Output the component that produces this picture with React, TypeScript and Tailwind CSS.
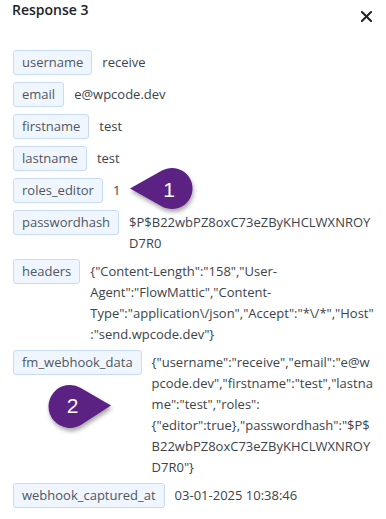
import React from "react";

const rows: [string, string][] = [
  ["username", "receive"],
  ["email", "e@wpcode.dev"],
  ["firstname", "test"],
  ["lastname", "test"],
  ["roles_editor", "1"],
  ["passwordhash", "$P$B22wbPZ8oxC73eZByKHCLWXNROYD7R0"],
  [
    "headers",
    '{"Content-Length":"158","User-Agent":"FlowMattic","Content-Type":"application\\/json","Accept":"*\\/*","Host":"send.wpcode.dev"}',
  ],
  [
    "fm_webhook_data",
    '{"username":"receive","email":"e@wpcode.dev","firstname":"test","lastname":"test","roles":{"editor":true},"passwordhash":"$P$B22wbPZ8oxC73eZByKHCLWXNROYD7R0"}',
  ],
  ["webhook_captured_at", "03-01-2025 10:38:46"],
];

function dropPath(px: number, py: number, cx: number, cy: number, r: number) {
  const d = Math.hypot(px - cx, py - cy);
  const a = Math.atan2(py - cy, px - cx);
  const t = Math.acos(r / d);
  const t1x = cx + r * Math.cos(a + t);
  const t1y = cy + r * Math.sin(a + t);
  const t2x = cx + r * Math.cos(a - t);
  const t2y = cy + r * Math.sin(a - t);
  return `M ${px} ${py} L ${t1x} ${t1y} A ${r} ${r} 0 1 1 ${t2x} ${t2y} Z`;
}

export default function App() {
  return (
    <div
      className="relative w-[386px] h-[519px] bg-white overflow-hidden"
      style={{ fontFamily: '"Open Sans", "Noto Sans", sans-serif' }}
    >
      <div className="flex items-start justify-between pl-[12px] pr-[14px]">
        <div className="text-[14px] leading-[21px] font-semibold text-[#1d2327] -mt-[1px]">
          Response 3
        </div>
        <button className="mt-[11px] text-[#1d2327]" aria-label="close">
          <svg width="11" height="11" viewBox="0 0 11 11" fill="none">
            <path d="M1 1 L10 10 M10 1 L1 10" stroke="currentColor" strokeWidth="2" strokeLinecap="square" />
          </svg>
        </button>
      </div>

      <div className="mt-[28px] pl-[13px] pr-[9px] flex flex-col gap-[7px]">
        {rows.map(([k, v]) => (
          <div key={k} className="flex items-start gap-[10px]">
            <span className="shrink-0 rounded-[3px] border border-[#c8dbf4] bg-[#eff6ff] px-2 py-px text-[13px] leading-[21px] text-[#50575e]">
              {k}
            </span>
            <span className="min-w-0 flex-1 pt-[2px] -mb-[2px] text-[13px] leading-[21px] text-[#3c434a] [overflow-wrap:anywhere]">
              {v}
            </span>
          </div>
        ))}
      </div>

      <svg
        className="pointer-events-none absolute left-0 top-0"
        width="386"
        height="519"
        viewBox="0 0 386 519"
      >
        <defs>
          <filter id="sh" x="-30%" y="-30%" width="160%" height="170%">
            <feDropShadow dx="1" dy="3" stdDeviation="2" floodColor="#000" floodOpacity="0.35" />
          </filter>
        </defs>
        <path d={dropPath(130, 188.5, 172, 188.5, 20.5)} fill="#5c2283" filter="url(#sh)" />
        <text
          x="169"
          y="196.5"
          textAnchor="middle"
          fill="#fff"
          fontSize="21"
          fontFamily='"Liberation Sans", Arial, sans-serif'
        >
          1
        </text>
        <path d={dropPath(111, 405.5, 70, 406.5, 21.5)} fill="#5c2283" filter="url(#sh)" />
        <text
          x="72.5"
          y="413"
          textAnchor="middle"
          fill="#fff"
          fontSize="21"
          fontFamily='"Liberation Sans", Arial, sans-serif'
        >
          2
        </text>
      </svg>
    </div>
  );
}
